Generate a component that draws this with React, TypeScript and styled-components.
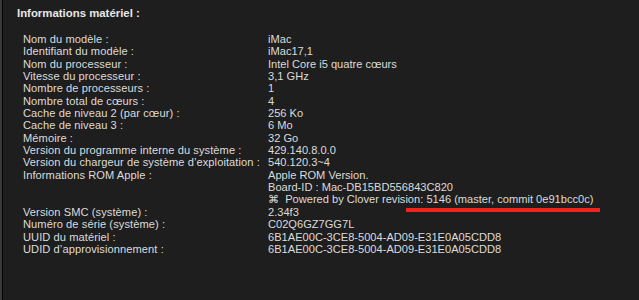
import React from "react";
import styled, { createGlobalStyle } from "styled-components";

const Global = createGlobalStyle`
  html, body { margin: 0; padding: 0; background: #1e1e1e; }
  body { font-family: "Liberation Sans", Arial, sans-serif; }
`;

const Frame = styled.div`
  width: 639px;
  height: 300px;
  box-sizing: border-box;
  border-left: 2px solid #3a3a3a;
  background: #1e1e1e;
  overflow: hidden;
`;

const Panel = styled.div`
  height: 100%;
  box-sizing: border-box;
  border-left: 1px solid #050505;
  padding: 6px 0 0 14px;
  color: #dcdcdc;
  font-size: 11.1px;
`;

const Title = styled.div`
  font-weight: bold;
  color: #e8e8e8;
  font-size: 11.4px;
  line-height: 14px;
  margin-bottom: 13px;
`;

const Grid = styled.div`
  display: grid;
  grid-template-columns: 245px 1fr;
  padding-left: 6px;
  line-height: 12.35px;
`;

const Label = styled.div`
  white-space: nowrap;
  letter-spacing: 0.08px;
`;

const Value = styled.div`
  white-space: nowrap;
`;

const Marked = styled.span`
  position: relative;
  &::after {
    content: "";
    position: absolute;
    left: -20px;
    right: -7px;
    top: 15px;
    height: 4px;
    background: #f0241b;
  }
`;

const rows: [string, React.ReactNode][] = [
  ["Nom du modèle :", "iMac"],
  ["Identifiant du modèle :", "iMac17,1"],
  ["Nom du processeur :", "Intel Core i5 quatre cœurs"],
  ["Vitesse du processeur :", "3,1 GHz"],
  ["Nombre de processeurs :", "1"],
  ["Nombre total de cœurs :", "4"],
  ["Cache de niveau 2 (par cœur) :", "256 Ko"],
  ["Cache de niveau 3 :", "6 Mo"],
  ["Mémoire :", "32 Go"],
  ["Version du programme interne du système :", "429.140.8.0.0"],
  ["Version du chargeur de système d’exploitation :", "540.120.3~4"],
  [
    "Informations ROM Apple :",
    <>
      Apple ROM Version.
      <br />
      Board-ID : Mac-DB15BD556843C820
      <br />
      ⌘&nbsp; Powered by Clover revision: <Marked>5146 (master, commit 0e91bcc0c)</Marked>
    </>,
  ],
  ["Version SMC (système) :", "2.34f3"],
  ["Numéro de série (système) :", "C02Q6GZ7GG7L"],
  ["UUID du matériel :", "6B1AE00C-3CE8-5004-AD09-E31E0A05CDD8"],
  ["UDID d’approvisionnement :", "6B1AE00C-3CE8-5004-AD09-E31E0A05CDD8"],
];

export default function App() {
  return (
    <>
      <Global />
      <Frame>
        <Panel>
          <Title>Informations matériel :</Title>
          <Grid>
            {rows.map(([l, v], i) => (
              <React.Fragment key={i}>
                <Label>{l}</Label>
                <Value>{v}</Value>
              </React.Fragment>
            ))}
          </Grid>
        </Panel>
      </Frame>
    </>
  );
}
